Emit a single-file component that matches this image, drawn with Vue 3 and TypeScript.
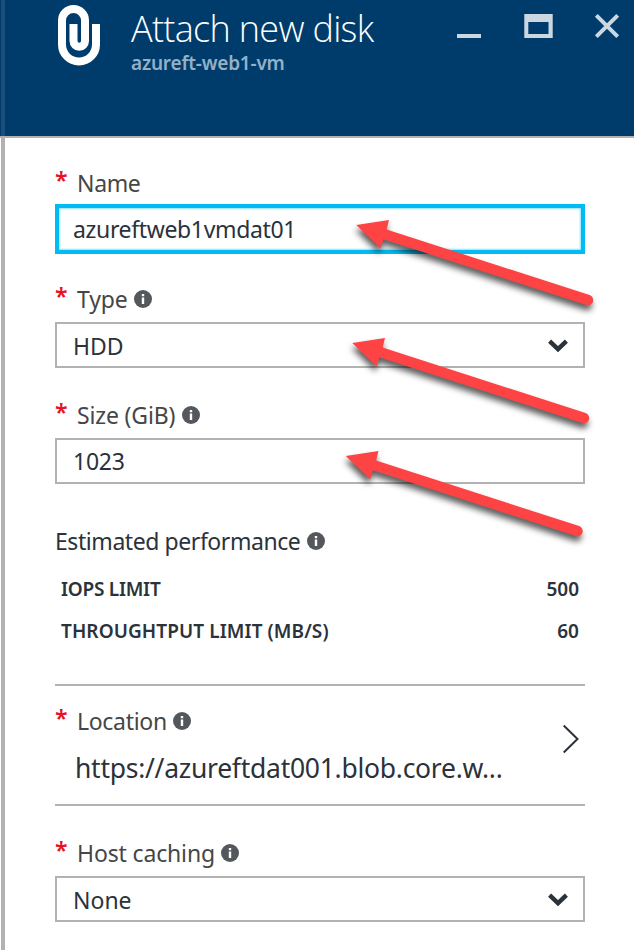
<script setup lang="ts">
interface Limit {
  label: string
  value: string
  cls: string
}

const limits: Limit[] = [
  { label: 'IOPS LIMIT', value: '500', cls: 'iops' },
  { label: 'THROUGHTPUT LIMIT (MB/S)', value: '60', cls: 'throughput' },
]

const arrows: { x: number; y: number }[] = [
  { x: 0, y: 0 },
  { x: -4, y: 118 },
  { x: -10.5, y: 231 },
]
</script>

<template>
  <div class="blade">
    <header class="head">
      <svg class="clip" width="44" height="64" viewBox="57 3 44 64">
        <path d="M96 24V44.5a17 17 0 0 1-34 0V20.5a11.5 11.5 0 0 1 23 0V41a5.75 5.75 0 0 1-11.5 0V24" />
      </svg>
      <div class="titles">
        <h1><span class="t-title">Attach new disk</span></h1>
        <p><span class="t-sub">azureft-web1-vm</span></p>
      </div>
      <svg class="controls" width="166" height="30" viewBox="456 10 166 30">
        <rect x="457" y="34" width="24" height="4" />
        <path fill-rule="evenodd" d="M524.3 14h28.4v24h-28.4zM528.3 22v12h20.2v-12z" />
        <path class="cross" d="M596.3 15.3l21.4 21.4M617.7 15.3l-21.4 21.4" />
      </svg>
    </header>

    <main class="body">
      <section class="field">
        <div class="label"><i>*</i><span class="l-name">Name</span></div>
        <div class="box focused"><span class="v-name">azureftweb1vmdat01</span></div>
      </section>

      <section class="field">
        <div class="label">
          <i>*</i><span class="l-type">Type</span>
          <svg class="info" width="18" height="18" viewBox="0 0 18 18"><circle cx="9" cy="9" r="9" /><path d="M7.8 4h2.4v2.2H7.8zM7.8 7.4h2.4V14H7.8z" /></svg>
        </div>
        <div class="box">
          <span class="v-hdd">HDD</span>
          <svg class="chev" width="20" height="14" viewBox="0 0 20 14"><path d="M1.6 2.2L10 10.2L18.4 2.2" /></svg>
        </div>
      </section>

      <section class="field">
        <div class="label">
          <i>*</i><span class="l-size">Size (GiB)</span>
          <svg class="info" width="18" height="18" viewBox="0 0 18 18"><circle cx="9" cy="9" r="9" /><path d="M7.8 4h2.4v2.2H7.8zM7.8 7.4h2.4V14H7.8z" /></svg>
        </div>
        <div class="box number"><span class="v-size">1023</span></div>
      </section>

      <section class="perf">
        <div class="label dark">
          <span class="l-perf">Estimated performance</span>
          <svg class="info" width="18" height="18" viewBox="0 0 18 18"><circle cx="9" cy="9" r="9" /><path d="M7.8 4h2.4v2.2H7.8zM7.8 7.4h2.4V14H7.8z" /></svg>
        </div>
        <div v-for="l in limits" :key="l.label" class="limit">
          <span :class="l.cls">{{ l.label }}</span>
          <span class="num">{{ l.value }}</span>
        </div>
      </section>

      <section class="location">
        <div class="loc-text">
          <div class="label">
            <i>*</i><span class="l-loc">Location</span>
            <svg class="info" width="18" height="18" viewBox="0 0 18 18"><circle cx="9" cy="9" r="9" /><path d="M7.8 4h2.4v2.2H7.8zM7.8 7.4h2.4V14H7.8z" /></svg>
          </div>
          <div class="url"><span class="v-url">https://azureftdat001.blob.core.w...</span></div>
        </div>
        <svg class="next" width="18" height="30" viewBox="0 0 18 30"><path d="M1.7 1.5L15.5 15L1.7 28.5" /></svg>
      </section>

      <section class="field">
        <div class="label">
          <i>*</i><span class="l-host">Host caching</span>
          <svg class="info" width="18" height="18" viewBox="0 0 18 18"><circle cx="9" cy="9" r="9" /><path d="M7.8 4h2.4v2.2H7.8zM7.8 7.4h2.4V14H7.8z" /></svg>
        </div>
        <div class="box">
          <span class="v-none">None</span>
          <svg class="chev" width="20" height="14" viewBox="0 0 20 14"><path d="M1.6 2.2L10 10.2L18.4 2.2" /></svg>
        </div>
      </section>
    </main>

    <svg class="arrows" width="634" height="950" viewBox="0 0 634 950">
      <g v-for="(a, n) in arrows" :key="n" :transform="`translate(${a.x} ${a.y})`">
        <path d="M356.3 225L389 220L386.6 229.4L589.6 295.1A5.2 5.2 0 0 1 586.4 305L383.4 239.2L380.6 248.5Z" />
      </g>
    </svg>
  </div>
</template>

<style>
body {
  margin: 0;
  background: #fff;
}
</style>

<style scoped>
.blade {
  position: relative;
  box-sizing: border-box;
  width: 634px;
  height: 950px;
  overflow: hidden;
  background: linear-gradient(to right, #fff 1px, #b2b2b2 1px, #b2b2b2 5px, #fff 5px);
  color: #2b323a;
  font: 400 23px/32px 'Noto Sans', 'Open Sans', sans-serif;
}
.head {
  box-sizing: border-box;
  display: flex;
  height: 138px;
  padding: 3px 12px 0 57px;
  border-bottom: 2px solid #b2b2b2;
  background: linear-gradient(to right, #003c6b 1px, #1b4f7a 1px, #1b4f7a 5px, #003c6b 5px);
}
.clip path {
  fill: none;
  stroke: #fff;
  stroke-width: 8;
}
.titles {
  flex: 1;
  padding-left: 30px;
  white-space: nowrap;
}
h1, p {
  margin: 0;
}
h1 {
  padding-top: 3px;
  color: #fff;
  font: 300 36px/45px 'Open Sans', sans-serif;
  letter-spacing: -0.68px;
}
p {
  color: #94b0c7;
  font-weight: 600;
  font-size: 19px;
  line-height: 24px;
  letter-spacing: -0.2px;
}
.controls {
  margin-top: 7px;
  fill: #ccd8e1;
}
.cross {
  fill: none;
  stroke: #ccd8e1;
  stroke-width: 4;
}
.body {
  padding: 29px 49px 0 55px;
}
.field {
  margin-bottom: 31px;
}
.label {
  display: flex;
  height: 32px;
  margin-bottom: 7px;
  color: #464646;
  white-space: nowrap;
}
.label.dark {
  color: #2b323a;
}
.label i {
  width: 22px;
  margin-top: -3px;
  color: #e81123;
  font-style: normal;
  font-weight: 600;
}
.l-name, .v-name {
  letter-spacing: -0.35px;
}
.l-type, .l-size, .l-host {
  letter-spacing: -0.15px;
}
.v-size {
  letter-spacing: -0.25px;
}
.l-loc {
  letter-spacing: -0.3px;
}
.l-perf {
  letter-spacing: -0.43px;
}
.iops {
  letter-spacing: -0.25px;
}
.throughput {
  letter-spacing: 0.09px;
}
.info {
  margin: 7px 0 0 6.5px;
  fill: #54585c;
}
.info path {
  fill: #fff;
}
.box {
  box-sizing: border-box;
  display: flex;
  align-items: center;
  justify-content: space-between;
  height: 46px;
  padding: 2px 15px 0 16px;
  border: 2px solid #b2b2b2;
  background: #fff;
}
.box.number {
  padding-top: 0;
}
.box.focused {
  height: 50px;
  margin: -2px 0;
  padding: 0 14px;
  border: 4px solid #00bcf2;
  box-shadow: inset 0 0 2px 1px #8fe0fa;
}
.chev path {
  fill: none;
  stroke: #2b323a;
  stroke-width: 4.4;
}
.perf {
  padding-top: 10px;
}
.perf .label {
  margin: 0 0 11px;
}
.limit {
  display: flex;
  justify-content: space-between;
  height: 42px;
  padding: 0 6px;
  font-size: 19px;
  font-weight: 600;
  line-height: 42px;
}
.location {
  box-sizing: border-box;
  display: flex;
  justify-content: space-between;
  height: 122px;
  margin: 32px 0 31px;
  padding-top: 19px;
  border-top: 2px solid #b2b2b2;
  border-bottom: 2px solid #b2b2b2;
}
.loc-text .label {
  margin-bottom: 11px;
}
.url {
  padding-left: 20px;
  font-size: 26.5px;
  line-height: 40px;
  letter-spacing: -0.27px;
}
.next {
  margin: 19px 5px 0 0;
}
.next path {
  fill: none;
  stroke: #2b323a;
  stroke-width: 2;
}
/* callout arrows float over the form */
.arrows {
  position: absolute;
  top: 0;
  left: 0;
  fill: #fd4343;
  filter: drop-shadow(-1px 5px 3px rgba(0, 0, 0, 0.65));
}
</style>
